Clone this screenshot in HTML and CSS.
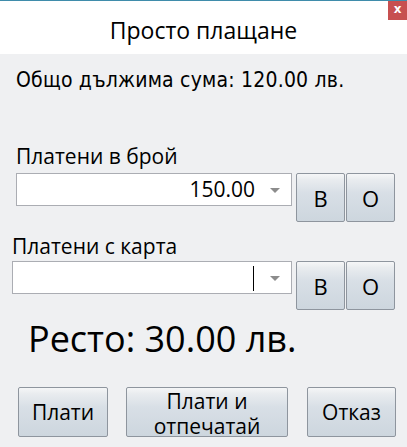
FILE: index.html
```html
<!doctype html>
<html lang="bg">
<head>
	<meta charset="UTF-8" />
	<title>Просто плащане</title>
	<link rel="stylesheet" href="styles.css">
</head>
<body>
	<div class="window">
		<!--заглавие-->
		<div class="titlebar">
			<h1 class="title">Просто плащане</h1>
			<a href="javascript:;" class="close">x</a>
		</div>

		<div class="content">
			<p class="total">Общо дължима сума: 120.00 лв.</p>

			<!--в брой-->
			<div class="field field-cash">
				<label class="field-label">Платени в брой</label>
				<div class="field-row">
					<div class="combo">
						<span class="combo-value">150.00</span>
						<span class="combo-arrow"></span>
					</div>
					<div class="keys">
						<button class="key">B</button>
						<button class="key">O</button>
					</div>
				</div>
			</div>

			<!--с карта-->
			<div class="field field-card">
				<label class="field-label">Платени с карта</label>
				<div class="field-row">
					<div class="combo">
						<span class="combo-value"><span class="caret"></span></span>
						<span class="combo-arrow"></span>
					</div>
					<div class="keys">
						<button class="key">B</button>
						<button class="key">O</button>
					</div>
				</div>
			</div>

			<p class="change">Ресто: 30.00 лв.</p>

			<!--бутони-->
			<div class="actions">
				<button class="btn btn-pay">Плати</button>
				<button class="btn btn-print"><span class="line">Плати и</span><span class="line">отпечатай</span></button>
				<button class="btn btn-cancel">Отказ</button>
			</div>
		</div>
	</div>
</body>
</html>
```

FILE: styles.css
```css
*{
	padding: 0;
	margin: 0;
	box-sizing: border-box;
}
body{
	background-color: #eff0f2;
	font-family: "Open Sans", "Noto Sans", sans-serif;
	color: #000;
}
a{
	text-decoration: none;
}

/*окно*/
.window{
	width: 407px;
	height: 447px;
	position: relative;
	overflow: hidden;
}
.titlebar{
	height: 54px;
	background-color: #fff;
	border-top: 1px solid #3f8cab;
	display: flex;
	justify-content: center;
}
.title{
	font-size: 23px;
	font-weight: normal;
	line-height: 30px;
	margin-top: 14px;
	color: #000;
}
.close{
	position: absolute;
	top: 1px;
	right: 0;
	width: 19px;
	height: 19px;
	background-color: #c75050;
	color: #fff;
	font: bold 12px/17px "DejaVu Sans", sans-serif;
	text-align: center;
}

/*съдържание*/
.total{
	margin: 14px 0 0 16px;
	font-family: "DejaVu Sans", sans-serif;
	font-stretch: condensed;
	font-size: 21px;
	line-height: 25px;
	letter-spacing: 0.2px;
}
.field-label{
	display: block;
	font-size: 21px;
	line-height: 26px;
}
.field-cash{
	margin: 50px 0 0 16px;
}
.field-cash .field-label{
	margin-bottom: 4px;
}
.field-card{
	margin: 11px 0 0 12px;
}
.field-card .field-label{
	margin-bottom: 2px;
}
.field-row{
	display: flex;
	align-items: flex-start;
}
.combo{
	width: 276px;
	height: 33px;
	background-color: #fff;
	border: 1px solid #abadb3;
	display: flex;
	align-items: center;
	margin-right: 4px;
}
.field-card .combo{
	width: 280px;
}
.combo-value{
	flex: 1;
	text-align: right;
	font-size: 21px;
	line-height: 31px;
	height: 31px;
}
.caret{
	display: inline-block;
	width: 1px;
	height: 25px;
	background-color: #000;
	vertical-align: middle;
	margin-top: -2px;
	margin-right: 1px;
}
.combo-arrow{
	width: 0;
	height: 0;
	border-left: 5px solid transparent;
	border-right: 5px solid transparent;
	border-top: 5px solid #8c8c8c;
	margin: 1px 11px 0 15px;
}
.keys{
	display: flex;
}
.key{
	width: 49px;
	height: 49px;
	margin-right: 1px;
	border: 1px solid #8e959e;
	border-radius: 2px;
	background: linear-gradient(to bottom, #f5f6f7 0%, #e9ecef 12%, #d8dfe6 40%, #cdd6de 100%);
	font-family: "Open Sans", "Noto Sans", sans-serif;
	font-size: 22px;
	color: #000;
}

.change{
	margin: 7px 0 0 28px;
	font-size: 36px;
	line-height: 44px;
}

/*бутони*/
.actions{
	display: flex;
	margin: 26px 0 0 18px;
	gap: 18px;
}
.btn{
	height: 50px;
	border: 1px solid #8e959e;
	border-radius: 2px;
	background: linear-gradient(to bottom, #f5f6f7 0%, #e9ecef 12%, #d8dfe6 40%, #cdd6de 100%);
	font-family: "Open Sans", "Noto Sans", sans-serif;
	font-size: 21px;
	line-height: 24px;
	color: #000;
}
.btn .line{
	display: block;
	line-height: 25px;
}
.btn-pay{
	width: 90px;
}
.btn-print{
	width: 162px;
	padding-top: 1px;
}
.btn-cancel{
	width: 89px;
	margin-left: 1px;
}
```
